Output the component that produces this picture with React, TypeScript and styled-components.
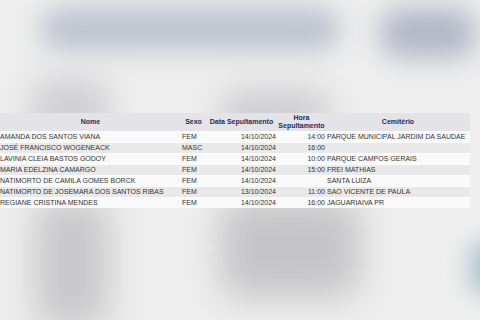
import styled, { createGlobalStyle } from "styled-components";

const GlobalStyle = createGlobalStyle`
  html, body {
    margin: 0;
    padding: 0;
    background: #efefef;
  }
`;

const Page = styled.div`
  width: 480px;
  height: 320px;
  overflow: hidden;
  background: #efefef;
  display: flex;
  flex-direction: column;
  font-family: "Liberation Sans", Arial, sans-serif;
`;

const BlurBand = styled.div<{ $h: number }>`
  height: ${(p) => p.$h}px;
  flex: none;
  display: flex;
  flex-direction: column;
  overflow: hidden;
`;

const BlobRow = styled.div<{ $pad: string; $gap: number; $h: number }>`
  display: flex;
  align-items: flex-start;
  height: ${(p) => p.$h}px;
  flex: none;
  padding: ${(p) => p.$pad};
  gap: ${(p) => p.$gap}px;
`;

const Blob = styled.div<{ $w: number; $h: number; $c: string; $b?: number; $top?: number }>`
  width: ${(p) => p.$w}px;
  height: ${(p) => p.$h}px;
  margin-top: ${(p) => p.$top ?? 0}px;
  flex: none;
  background: ${(p) => p.$c};
  border-radius: 20px;
  filter: blur(${(p) => p.$b ?? 10}px);
`;

const Table = styled.table`
  width: 470px;
  border-collapse: collapse;
  table-layout: fixed;
  font-size: 7px;
  flex: none;
`;

const HeadCell = styled.th<{ $w: number }>`
  width: ${(p) => p.$w}px;
  height: 18px;
  padding: 0;
  background: #e4e4e8;
  color: #1f2d5c;
  font-weight: bold;
  text-align: center;
  line-height: 8px;
  vertical-align: middle;
`;

const Row = styled.tr<{ $alt: boolean }>`
  background: ${(p) => (p.$alt ? "#e9e9e9" : "#fafafa")};
  border-top: 1px solid #ffffff;
`;

const Cell = styled.td<{ $align?: string }>`
  height: 10px;
  padding: 0 1px 0 1px;
  color: #333333;
  white-space: nowrap;
  overflow: hidden;
  line-height: 10px;
  text-align: ${(p) => p.$align ?? "left"};
`;

const NameCell = styled(Cell)`
  padding-left: 0;
`;

interface Sepultamento {
  nome: string;
  sexo: string;
  data: string;
  hora: string;
  cemiterio: string;
}

const rows: Sepultamento[] = [
  { nome: "AMANDA DOS SANTOS VIANA", sexo: "FEM", data: "14/10/2024", hora: "14:00", cemiterio: "PARQUE MUNICIPAL JARDIM DA SAUDAE" },
  { nome: "JOSÉ FRANCISCO WOGENEACK", sexo: "MASC", data: "14/10/2024", hora: "16:00", cemiterio: "" },
  { nome: "LAVINIA CLEIA BASTOS GODOY", sexo: "FEM", data: "14/10/2024", hora: "10:00", cemiterio: "PARQUE CAMPOS GERAIS" },
  { nome: "MARIA EDELZINA CAMARGO", sexo: "FEM", data: "14/10/2024", hora: "15:00", cemiterio: "FREI MATHIAS" },
  { nome: "NATIMORTO DE CAMILA GOMES BORCK", sexo: "FEM", data: "14/10/2024", hora: "", cemiterio: "SANTA LUIZA" },
  { nome: "NATIMORTO DE JOSEMARA DOS SANTOS RIBAS", sexo: "FEM", data: "13/10/2024", hora: "11:00", cemiterio: "SAO VICENTE DE PAULA" },
  { nome: "REGIANE CRISTINA MENDES", sexo: "FEM", data: "14/10/2024", hora: "16:00", cemiterio: "JAGUARIAIVA PR" },
];

export default function App() {
  return (
    <Page>
      <GlobalStyle />
      <BlurBand $h={113}>
        <BlobRow $pad="8px 0 0 40px" $gap={40} $h={56}>
          <Blob $w={300} $h={42} $c="#bcc1ce" $b={14} />
          <Blob $w={96} $h={50} $c="#b2b7c6" $b={14} />
        </BlobRow>
        <BlobRow $pad="0 0 0 30px" $gap={110} $h={57}>
          <Blob $w={80} $h={70} $c="#d0d0d3" $b={16} $top={14} />
          <Blob $w={110} $h={60} $c="#cfcfd2" $b={16} $top={24} />
        </BlobRow>
      </BlurBand>
      <Table>
        <thead>
          <tr>
            <HeadCell $w={181}>Nome</HeadCell>
            <HeadCell $w={25}>Sexo</HeadCell>
            <HeadCell $w={71}>Data Sepultamento</HeadCell>
            <HeadCell $w={49}>
              Hora
              <br />
              Sepultamento
            </HeadCell>
            <HeadCell $w={144}>Cemitério</HeadCell>
          </tr>
        </thead>
        <tbody>
          {rows.map((r, i) => (
            <Row key={r.nome} $alt={i % 2 === 1}>
              <NameCell>{r.nome}</NameCell>
              <Cell>{r.sexo}</Cell>
              <Cell $align="right">{r.data}</Cell>
              <Cell $align="right">{r.hora}</Cell>
              <Cell>{r.cemiterio}</Cell>
            </Row>
          ))}
        </tbody>
      </Table>
      <BlurBand $h={120}>
        <BlobRow $pad="0 0 0 34px" $gap={110} $h={120}>
          <Blob $w={76} $h={130} $c="#c8c8ca" $b={18} $top={-10} />
          <Blob $w={140} $h={100} $c="#c5c5c7" $b={18} $top={-10} />
          <Blob $w={40} $h={56} $c="#a9bfcc" $b={12} $top={32} />
        </BlobRow>
      </BlurBand>
    </Page>
  );
}
